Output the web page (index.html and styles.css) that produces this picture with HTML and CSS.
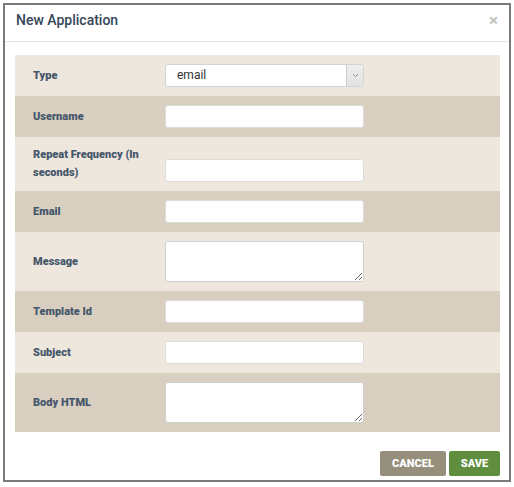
FILE: index.html
```html
<!DOCTYPE html>
<html>
<head>
<meta charset="utf-8">
<link rel="stylesheet" href="styles.css">
</head>
<body>
<div class="dialog">
  <div class="header">
    <span class="title">New Application</span>
    <span class="close">×</span>
  </div>
  <div class="body">
    <div class="panel">
      <div class="row light">
        <label class="lbl">Type</label>
        <div class="select"><span class="sel-text">email</span><span class="sel-arrow"><svg width="7" height="5" viewBox="0 0 7 5"><path d="M1 1.2 L3.5 3.6 L6 1.2" fill="none" stroke="#8a8a8a" stroke-width="1"/></svg></span></div>
      </div>
      <div class="row dark">
        <label class="lbl">Username</label>
        <input class="inp" type="text">
      </div>
      <div class="row light">
        <label class="lbl">Repeat Frequency (In seconds)</label>
        <input class="inp end" type="text">
      </div>
      <div class="row dark">
        <label class="lbl">Email</label>
        <input class="inp" type="text">
      </div>
      <div class="row light">
        <label class="lbl">Message</label>
        <textarea class="ta"></textarea>
      </div>
      <div class="row dark">
        <label class="lbl">Template Id</label>
        <input class="inp" type="text">
      </div>
      <div class="row light">
        <label class="lbl">Subject</label>
        <input class="inp" type="text">
      </div>
      <div class="row dark">
        <label class="lbl">Body HTML</label>
        <textarea class="ta"></textarea>
      </div>
    </div>
    <div class="footer">
      <button class="btn cancel">CANCEL</button>
      <button class="btn save">SAVE</button>
    </div>
  </div>
</div>
</body>
</html>
```
FILE: styles.css
```css
html, body {
  margin: 0;
  padding: 0;
  background: #ffffff;
  font-family: Roboto, "Liberation Sans", sans-serif;
}
.dialog {
  margin: 3px;
  width: 508px;
  height: 479px;
  box-sizing: border-box;
  border: 2px solid #7b7b7b;
  background: #ffffff;
}
.header {
  height: 37px;
  box-sizing: border-box;
  border-bottom: 1px solid #e5e5e5;
  padding: 5px 11px 0 11px;
  display: flex;
  justify-content: space-between;
  align-items: flex-start;
}
.title {
  font-size: 14px;
  font-weight: 500;
  line-height: 20px;
  color: #34465a;
}
.close {
  font-size: 17px;
  font-weight: 700;
  line-height: 16px;
  color: #c4c4c4;
  margin-top: 2px;
}
.body {
  padding: 13px 9px 0 10px;
}
.panel {
  display: flex;
  flex-direction: column;
}
.row {
  display: grid;
  grid-template-columns: 150px 199px;
  align-items: center;
  padding: 9px 0;
}
.light { background: #ede7de; }
.dark { background: #d8cfc1; }
.lbl {
  padding-left: 18px;
  padding-right: 10px;
  font-size: 11px;
  font-weight: 900;
  line-height: 18px;
  color: #46566a;
}
.inp {
  width: 199px;
  height: 23px;
  box-sizing: border-box;
  border: 1px solid #dcdcdc;
  border-radius: 3px;
  background: #ffffff;
  margin: 0;
  padding: 0 8px;
  font-family: Roboto, "Liberation Sans", sans-serif;
  font-size: 12px;
  outline: none;
}
.end { align-self: end; }
.ta {
  width: 199px;
  height: 41px;
  box-sizing: border-box;
  border: 1px solid #cfcfcf;
  border-radius: 3px;
  background: #ffffff;
  margin: 0;
  padding: 4px 8px;
  resize: vertical;
  display: block;
  font-family: Roboto, "Liberation Sans", sans-serif;
}
.select {
  width: 199px;
  height: 23px;
  box-sizing: border-box;
  border: 1px solid #d4d4d4;
  border-radius: 3px;
  background: #ffffff;
  display: flex;
  align-items: stretch;
  overflow: hidden;
}
.sel-text {
  flex: 1;
  font-size: 12px;
  line-height: 21px;
  color: #333333;
  padding-left: 11px;
}
.sel-arrow {
  width: 16px;
  border-left: 1px solid #cccccc;
  background: linear-gradient(#eeeeee, #e2e2e2);
  display: flex;
  align-items: center;
  justify-content: center;
}
.footer {
  display: flex;
  justify-content: flex-end;
  gap: 3px;
  margin-top: 19px;
}
.btn {
  height: 25px;
  border: none;
  border-radius: 2px;
  padding: 0 11px;
  font-family: Roboto, "Liberation Sans", sans-serif;
  font-size: 11px;
  font-weight: 900;
  color: #ffffff;
}
.cancel { background: #958f7b; width: 66px; }
.save { background: #5f8e3f; width: 51px; }
```
